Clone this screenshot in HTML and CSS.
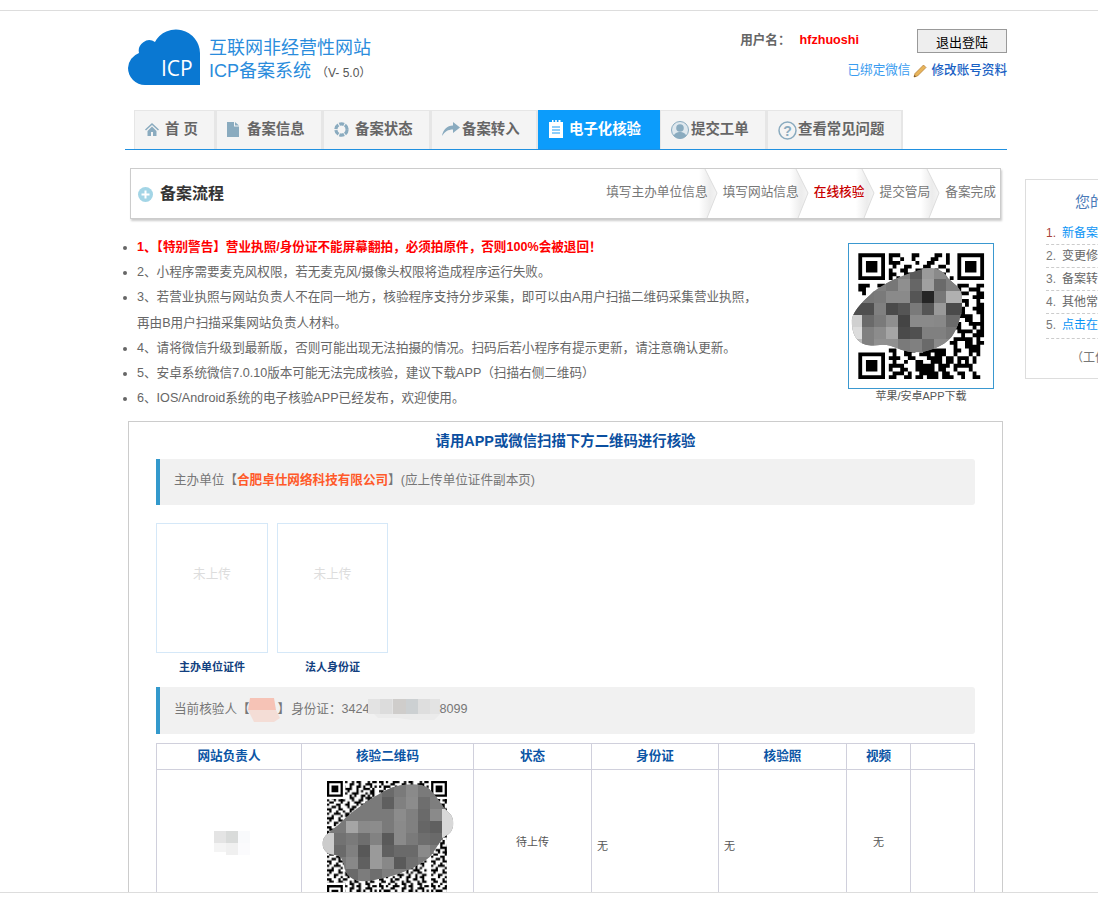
FILE: index.html
```html
<!DOCTYPE html>
<html lang="zh-CN">
<head>
<meta charset="utf-8">
<title>ICP备案系统</title>
<link rel="stylesheet" href="styles.css">
</head>
<body>
<div class="topbar"></div>
<div class="viewport">
  <main class="main">
    <header class="header">
      <div class="brand">
        <svg class="cloud" viewBox="0 0 72 56" width="72" height="56">
          <path fill="#0a78d2" d="M72 56V24A24 24 0 0 0 27 13A10.5 10.5 0 0 0 11 24A17 17 0 0 0 0 39A17 17 0 0 0 17 56Z"/>
          <text x="33" y="47" class="cloud-text">ICP</text>
        </svg>
        <div class="brand-text">
          <div class="brand-line">互联网非经营性网站</div>
          <div class="brand-line">ICP备案系统 <span class="version">（V- 5.0）</span></div>
        </div>
      </div>
      <div class="account">
        <div class="account-row">
          <span class="user-label">用户名：</span>
          <span class="user-name">hfzhuoshi</span>
          <button class="logout">退出登陆</button>
        </div>
        <div class="account-links">
          <a class="link-wechat">已绑定微信</a>
          <svg class="pencil" viewBox="0 0 14 14" width="14" height="14">
            <path fill="#e8b45a" stroke="#b07a30" stroke-width=".7" d="M10.5 1l2.5 2.5L4.5 12 1 13l1-3.5z"/>
            <path fill="#6b4a20" d="M1 13l.5-2 1.5 1.5z"/>
          </svg>
          <a class="link-edit">修改账号资料</a>
        </div>
      </div>
    </header>

    <nav class="nav">
      <a class="tab tab-home">
        <svg class="ico ico-home" viewBox="0 0 14 14" width="14" height="14"><path fill="#8aabbf" d="M7 1L0 7.5l1 1L7 3l6 5.5 1-1zM2.5 9v5h3.5v-4h2v4h3.500V9L7 4.500z"/></svg>
        <span>首 页</span>
      </a>
      <a class="tab tab-md">
        <svg class="ico ico-file" viewBox="0 0 12 15" width="12" height="15"><path fill="#8aabbf" d="M0 0h7v4.500h5V15H0zM8 0l4 3.500H8z"/></svg>
        <span>备案信息</span>
      </a>
      <a class="tab tab-lg">
        <svg class="ico ico-ring" viewBox="0 0 16 16" width="15" height="15"><circle cx="8" cy="8" r="6" fill="none" stroke="#8aabbf" stroke-width="3.4" stroke-dasharray="5.200 1.080"/></svg>
        <span>备案状态</span>
      </a>
      <a class="tab tab-md">
        <svg class="ico ico-arrow" viewBox="0 0 18 14" width="18" height="14"><path fill="#8aabbf" d="M11 0l7 5.500L11 11V7.500C6 7.500 3 9.500 0 14 1 8 5 3.500 11 3.500z"/></svg>
        <span>备案转入</span>
      </a>
      <a class="tab tab-active">
        <svg class="ico ico-clip" viewBox="0 0 14 18" width="14" height="18"><path fill="#fff" d="M0 2h3V0h1.500v2h1.700V0h1.600v2h1.700V0H11.500v2H14v16H0z"/><path stroke="#1a9cf5" stroke-width="1" d="M3 7h8M3 10h8M3 13h8"/></svg>
        <span>电子化核验</span>
      </a>
      <a class="tab tab-md">
        <svg class="ico ico-person" viewBox="0 0 18 18" width="18" height="18"><circle cx="9" cy="9" r="8.500" fill="#dfe8ee" stroke="#8aabbf"/><circle cx="9" cy="7" r="3.800" fill="#8aabbf"/><path fill="#8aabbf" d="M2.800 15c.7-3 3.500-4 6.200-4s5.500 1 6.200 4A8.500 8.500 0 0 1 2.800 15z"/></svg>
        <span>提交工单</span>
      </a>
      <a class="tab tab-xl">
        <svg class="ico ico-help" viewBox="0 0 19 19" width="19" height="19"><circle cx="9.500" cy="9.500" r="8.500" fill="none" stroke="#8aabbf" stroke-width="1.500"/><text x="9.500" y="15" class="help-mark">?</text></svg>
        <span>查看常见问题</span>
      </a>
    </nav>

    <section class="flow">
      <h2 class="flow-title">
        <svg viewBox="0 0 15 15" width="15" height="15"><circle cx="7.500" cy="7.500" r="7.500" fill="#a3d5e6"/><path stroke="#fff" stroke-width="2" d="M7.500 3.500v8M3.500 7.500h8"/></svg>
        备案流程
      </h2>
      <svg class="defs" width="0" height="0"><defs><linearGradient id="chevfill" x1="0" x2="1" y1="0" y2="0"><stop offset="0" stop-color="#fff"/><stop offset=".35" stop-color="#fff"/><stop offset=".75" stop-color="#ececec"/><stop offset="1" stop-color="#f4f4f4"/></linearGradient></defs></svg>
      <ol class="steps">
        <li class="step"><svg class="chev" viewBox="0 0 30 49"><path fill="url(#chevfill)" d="M0 0H16L28 24 18 49H0Z"/><path fill="none" stroke="#ddd" d="M16 0L28 24 18 49"/></svg><span>填写主办单位信息</span></li>
        <li class="step"><svg class="chev" viewBox="0 0 30 49"><path fill="url(#chevfill)" d="M0 0H16L28 24 18 49H0Z"/><path fill="none" stroke="#ddd" d="M16 0L28 24 18 49"/></svg><span>填写网站信息</span></li>
        <li class="step step-on"><svg class="chev" viewBox="0 0 30 49"><path fill="url(#chevfill)" d="M0 0H16L28 24 18 49H0Z"/><path fill="none" stroke="#ddd" d="M16 0L28 24 18 49"/></svg><span>在线核验</span></li>
        <li class="step"><svg class="chev" viewBox="0 0 30 49"><path fill="url(#chevfill)" d="M0 0H16L28 24 18 49H0Z"/><path fill="none" stroke="#ddd" d="M16 0L28 24 18 49"/></svg><span>提交管局</span></li>
        <li class="step"><span>备案完成</span></li>
      </ol>
    </section>

    <section class="notice">
      <ul class="notice-list">
        <li class="warn">1、【特别警告】营业执照/身份证不能屏幕翻拍，必须拍原件，否则100%会被退回！</li>
        <li>2、小程序需要麦克风权限，若无麦克风/摄像头权限将造成程序运行失败。</li>
        <li>3、若营业执照与网站负责人不在同一地方，核验程序支持分步采集，即可以由A用户扫描二维码采集营业执照，<br>再由B用户扫描采集网站负责人材料。</li>
        <li>4、请将微信升级到最新版，否则可能出现无法拍摄的情况。扫码后若小程序有提示更新，请注意确认更新。</li>
        <li>5、安卓系统微信7.0.10版本可能无法完成核验，建议下载APP（扫描右侧二维码）</li>
        <li>6、IOS/Android系统的电子核验APP已经发布，欢迎使用。</li>
      </ul>
      <figure class="app-qr">
        <div class="app-qr-box">
          <svg class="qr" viewBox="-3 -3 432 432" width="144" height="144">
            <defs>
              <clipPath id="blob1"><path d="M5 225C12 190 45 165 70 140 110 110 170 85 210 75 250 62 280 75 295 100 310 118 335 125 336 160 338 200 325 250 305 275 280 305 235 322 190 322 150 320 125 295 90 300 50 305 5 300 5 225Z"/></clipPath>
            </defs>
            <g transform="translate(25 25) scale(11.43)">
              <path class="qr-ink" d="M.5 0v7M6.500 0v7M0 .5h7M0 6.500h7M2 2.500h3M2 3.500h3M2 4.500h3M26.500 0v7M32.500 0v7M26 .5h7M26 6.500h7M28 2.500h3M28 3.500h3M28 4.500h3M.5 26v7M6.500 26v7M0 26.500h7M0 32.500h7M2 28.500h3M2 29.500h3M2 30.500h3"/>
              <path class="qr-ink" d="M8 .5h3m3 0h2m4 0h2m1 0h1M8 1.500h1m2 0h1m2 0h1m4 0h2m2 0h1M8 2.500h3m4 0h1m2 0h2m3 0h1M9 3.500h1m2 0h2m3 0h2m2 0h2M8 4.500h1m2 0h2m2 0h2m3 0h1m2 0h1M8 5.500h2m2 0h3m6 0h2M8 6.500h1m1 0h1m1 0h1m1 0h1m1 0h1m1 0h1m1 0h1m1 0h1m1 0h1M9 7.500h3M0 8.500h3m2 0h2M26 8.500h3m2 0h2M0 9.500h2m4 0h1M25 9.500h2m2 0h3M1 10.500h1M27 10.500h2m2 0h2M26 11.500h1m3 0h3M26 12.500h3m2 0h1M28 13.500h1m2 0h2M26 14.500h2m2 0h3M27 15.500h1m3 0h2M26 16.500h4m2 0h1M28 17.500h2m2 0h1M26 18.500h1m2 0h4M25 19.500h2m3 0h1m1 0h1M26 20.500h4m1 0h2M27 21.500h1m2 0h3M25 22.500h5m1 0h1M24 23.500h2m2 0h2m1 0h2M25 24.500h1m2 0h4M8 25.500h2m2 0h3m2 0h6m2 0h2m2 0h3M9 26.500h1m2 0h2m2 0h3m1 0h3m2 0h1m3 0h1m1 0h1M8 27.500h3m2 0h2m3 0h4m1 0h2m1 0h3m1 0h1M9 28.500h1m2 0h1m2 0h2m2 0h3m1 0h2m1 0h1m1 0h1m1 0h1M8 29.500h4m3 0h5m1 0h3m1 0h5M8 30.500h1m2 0h2m2 0h5m1 0h2m2 0h1m3 0h1M9 31.500h3m1 0h1m2 0h5m1 0h2m2 0h2m2 0h1M8 32.500h2m2 0h2m1 0h2m1 0h3m1 0h3m2 0h1m2 0h2"/>
            </g>
            <g clip-path="url(#blob1)">
              <rect x="0" y="60" width="340" height="270" fill="#808080"/>
              <rect x="180" y="66" width="36" height="36" fill="#5a5a5a"/><rect x="216" y="66" width="36" height="36" fill="#9a9a9a"/><rect x="252" y="66" width="36" height="36" fill="#8a8a8a"/>
              <rect x="108" y="102" width="36" height="36" fill="#777"/><rect x="144" y="102" width="36" height="36" fill="#8f8f8f"/><rect x="180" y="102" width="36" height="36" fill="#666"/><rect x="216" y="102" width="36" height="36" fill="#a0a0a0"/><rect x="252" y="102" width="36" height="36" fill="#6a6a6a"/><rect x="288" y="102" width="48" height="36" fill="#808080"/>
              <rect x="36" y="138" width="36" height="36" fill="#777"/><rect x="72" y="138" width="36" height="36" fill="#7a7a7a"/><rect x="108" y="138" width="36" height="36" fill="#8a8a8a"/><rect x="144" y="138" width="36" height="36" fill="#8a8a8a"/><rect x="180" y="138" width="36" height="36" fill="#555"/><rect x="216" y="138" width="36" height="36" fill="#252525"/><rect x="252" y="138" width="36" height="36" fill="#777"/><rect x="288" y="138" width="48" height="36" fill="#b0b0b0"/>
              <rect x="0" y="174" width="72" height="36" fill="#4f4f4f"/><rect x="72" y="174" width="36" height="36" fill="#808080"/><rect x="108" y="174" width="36" height="36" fill="#4a4a4a"/><rect x="144" y="174" width="36" height="36" fill="#555"/><rect x="180" y="174" width="36" height="36" fill="#7a7a7a"/><rect x="216" y="174" width="36" height="36" fill="#555"/><rect x="252" y="174" width="36" height="36" fill="#999"/><rect x="288" y="174" width="48" height="36" fill="#4a4a4a"/>
              <rect x="0" y="210" width="36" height="36" fill="#d0d0d0"/><rect x="36" y="210" width="36" height="36" fill="#6a6a6a"/><rect x="72" y="210" width="36" height="36" fill="#7a7a7a"/><rect x="108" y="210" width="36" height="36" fill="#8f8f8f"/><rect x="144" y="210" width="36" height="36" fill="#444"/><rect x="180" y="210" width="36" height="36" fill="#8a8a8a"/><rect x="216" y="210" width="36" height="36" fill="#8a8a8a"/><rect x="252" y="210" width="36" height="36" fill="#888"/><rect x="288" y="210" width="48" height="36" fill="#6a6a6a"/>
              <rect x="0" y="246" width="36" height="36" fill="#dcdcdc"/><rect x="36" y="246" width="36" height="36" fill="#808080"/><rect x="72" y="246" width="36" height="36" fill="#8c8c8c"/><rect x="108" y="246" width="36" height="36" fill="#a5a5a5"/><rect x="144" y="246" width="36" height="36" fill="#4a4a4a"/><rect x="180" y="246" width="36" height="36" fill="#505050"/><rect x="216" y="246" width="36" height="36" fill="#808080"/><rect x="252" y="246" width="36" height="36" fill="#808080"/><rect x="288" y="246" width="48" height="36" fill="#777"/>
              <rect x="0" y="282" width="36" height="48" fill="#bbb"/><rect x="36" y="282" width="36" height="48" fill="#808080"/><rect x="72" y="282" width="72" height="48" fill="#909090"/><rect x="144" y="282" width="36" height="48" fill="#7a7a7a"/><rect x="180" y="282" width="36" height="48" fill="#808080"/><rect x="216" y="282" width="36" height="48" fill="#6a6a6a"/><rect x="252" y="282" width="48" height="48" fill="#8a8a8a"/>
            </g>
          </svg>
        </div>
        <figcaption class="app-qr-cap">苹果/安卓APP下载</figcaption>
      </figure>
    </section>

    <section class="panel">
      <h3 class="panel-title">请用APP或微信扫描下方二维码进行核验</h3>
      <div class="bar">主办单位【<b class="org">合肥卓仕网络科技有限公司</b>】(应上传单位证件副本页)</div>
      <div class="uploads">
        <figure class="upload upload-a">
          <div class="upload-box">未上传</div>
          <figcaption class="upload-cap">主办单位证件</figcaption>
        </figure>
        <figure class="upload upload-b">
          <div class="upload-box">未上传</div>
          <figcaption class="upload-cap">法人身份证</figcaption>
        </figure>
      </div>
      <div class="bar bar-person">当前核验人【<svg class="mask-name" viewBox="0 0 32 24" width="32" height="24"><path fill="#f6c3b6" d="M2 0h24l2 12H0z"/><path fill="#f4ddd6" d="M0 12h28l4 8-6 4H6z"/></svg>】<span class="id-label">身份证：3424</span><svg class="mask-id" viewBox="0 0 72 22" width="72" height="22"><rect width="72" height="15" fill="#e3e3e3"/><rect x="12" width="12" height="15" fill="#dcdcdc"/><rect x="25" width="13" height="15" fill="#cfcdcb"/><rect x="38" width="12" height="15" fill="#ccd0d2"/><rect x="50" width="12" height="15" fill="#dedede"/><path fill="#ebebeb" d="M6 15h66l-6 6H44L30 19H10z"/></svg>8099</div>
      <table class="verify">
        <colgroup><col class="c1"><col class="c2"><col class="c3"><col class="c4"><col class="c5"><col class="c6"><col class="c7"></colgroup>
        <thead>
          <tr><th>网站负责人</th><th>核验二维码</th><th>状态</th><th>身份证</th><th>核验照</th><th>视频</th><th></th></tr>
        </thead>
        <tbody>
          <tr>
            <td class="center"><svg class="mask-person" viewBox="0 0 36 24" width="36" height="24"><rect width="12" height="12" fill="#e4e4e4"/><rect x="12" width="12" height="12" fill="#d9dbda"/><rect x="24" width="12" height="12" fill="#f9fafc"/><rect y="12" width="12" height="9" fill="#f4f4f4"/><rect x="12" y="12" width="12" height="12" fill="#f0f0f0"/><rect x="24" y="12" width="12" height="12" fill="#fbfbfd"/></svg></td>
            <td class="qr-cell">
              <svg class="qr qr-small" viewBox="0 0 420 420" width="140" height="140">
                <defs>
                  <clipPath id="blob2"><path d="M8 200C12 175 50 160 75 130 110 100 150 70 200 45 240 25 300 22 325 40 350 60 365 95 385 112 405 125 405 165 385 178 360 190 355 215 330 245 295 275 240 300 160 315 110 325 85 310 75 285 68 250 65 240 30 238 15 230 6 220 8 200Z"/></clipPath>
                  <pattern id="noise" width="23" height="23" patternUnits="userSpaceOnUse">
                    <path class="qr-ink" d="M0 .5h2m1 0h1m2 0h3m2 0h1m1 0h2m3 0h1m1 0h2M1 1.500h1m3 0h2m3 0h2m2 0h1m2 0h3M0 2.500h1m1 0h3m2 0h1m2 0h1m2 0h2m1 0h1m2 0h1m1 0h1M2 3.500h1m2 0h1m2 0h3m2 0h1m2 0h3m1 0h1M0 4.500h2m2 0h2m3 0h1m3 0h1m1 0h1m3 0h2M1 5.500h1m2 0h1m2 0h2m2 0h3m3 0h1m1 0h2M0 6.500h1m3 0h3m3 0h1m1 0h1m2 0h2m1 0h1m1 0h1M2 7.500h2m2 0h1m3 0h2m3 0h1m1 0h3M0 8.500h1m2 0h1m1 0h3m3 0h1m2 0h2m2 0h1m1 0h1M1 9.500h2m3 0h1m2 0h1m2 0h3m2 0h1m2 0h1M0 10.500h1m3 0h2m2 0h2m3 0h1m1 0h2m2 0h2M2 11.500h2m1 0h1m3 0h1m1 0h2m3 0h1m2 0h1M0 12.500h2m3 0h2m3 0h2m2 0h1m1 0h1m3 0h1M1 13.500h1m2 0h1m2 0h1m2 0h1m2 0h3m2 0h2M0 14.500h1m2 0h3m2 0h2m3 0h1m2 0h1m2 0h1M2 15.500h1m3 0h1m1 0h2m3 0h2m1 0h1m1 0h1M0 16.500h3m2 0h1m3 0h1m2 0h1m2 0h3m2 0h1M1 17.500h1m3 0h2m1 0h1m3 0h1m1 0h1m2 0h2M0 18.500h1m2 0h2m3 0h3m2 0h1m2 0h1m2 0h2M3 19.500h1m2 0h1m2 0h1m2 0h2m2 0h1m1 0h2M0 20.500h2m3 0h1m1 0h2m3 0h1m2 0h2m2 0h1M1 21.500h2m2 0h2m3 0h1m1 0h2m3 0h1m1 0h2M0 22.500h1m3 0h1m2 0h1m2 0h2m2 0h1m2 0h2"/>
                  </pattern>
                </defs>
                <g transform="translate(21 18) scale(6.79)">
                  <rect width="53" height="53" fill="url(#noise)"/>
                  <path class="qr-clear" d="M0 0h8v8H0zM45 0h8v8h-8zM0 45h8v8H0z"/>
                  <path class="qr-ink" d="M.5 0v7M6.500 0v7M0 .5h7M0 6.500h7M2 2.500h3M2 3.500h3M2 4.500h3M46.500 0v7M52.500 0v7M46 .5h7M46 6.500h7M48 2.500h3M48 3.500h3M48 4.500h3M.5 46v7M6.500 46v7M0 46.500h7M0 52.500h7M2 48.500h3M2 49.500h3M2 50.500h3"/>
                </g>
                <g clip-path="url(#blob2)">
                  <rect x="0" y="20" width="410" height="310" fill="#7a7a7a"/>
                  <rect x="186" y="30" width="36" height="36" fill="#6a6a6a"/><rect x="222" y="30" width="36" height="36" fill="#7a7a7a"/><rect x="258" y="30" width="36" height="36" fill="#8a8a8a"/><rect x="294" y="30" width="36" height="36" fill="#7a7a7a"/>
                  <rect x="186" y="66" width="36" height="36" fill="#5f5f5f"/><rect x="222" y="66" width="36" height="36" fill="#808080"/><rect x="258" y="66" width="36" height="36" fill="#8c8c8c"/><rect x="294" y="66" width="36" height="36" fill="#6e6e6e"/><rect x="330" y="66" width="36" height="36" fill="#7e7e7e"/>
                  <rect x="222" y="102" width="36" height="36" fill="#8c8c8c"/><rect x="258" y="102" width="36" height="36" fill="#808080"/><rect x="294" y="102" width="36" height="36" fill="#6a6a6a"/><rect x="330" y="102" width="36" height="36" fill="#8a8a8a"/><rect x="366" y="102" width="44" height="36" fill="#d8d8d8"/>
                  <rect x="78" y="138" width="36" height="36" fill="#a5a5a5"/><rect x="114" y="138" width="36" height="36" fill="#8a8a8a"/><rect x="150" y="138" width="36" height="36" fill="#8c8c8c"/><rect x="222" y="138" width="36" height="36" fill="#8a8a8a"/><rect x="258" y="138" width="36" height="36" fill="#808080"/><rect x="294" y="138" width="36" height="36" fill="#666"/><rect x="330" y="138" width="36" height="36" fill="#606060"/><rect x="366" y="138" width="44" height="50" fill="#d8d8d8"/>
                  <rect x="0" y="174" width="42" height="72" fill="#ccc"/><rect x="42" y="174" width="36" height="36" fill="#727272"/><rect x="114" y="174" width="36" height="36" fill="#6e6e6e"/><rect x="150" y="174" width="36" height="36" fill="#828282"/><rect x="186" y="174" width="36" height="36" fill="#5a5a5a"/><rect x="222" y="174" width="36" height="36" fill="#8a8a8a"/><rect x="294" y="174" width="36" height="36" fill="#6e6e6e"/><rect x="330" y="174" width="36" height="36" fill="#6a6a6a"/>
                  <rect x="42" y="210" width="36" height="36" fill="#6a6a6a"/><rect x="78" y="210" width="36" height="36" fill="#808080"/><rect x="114" y="210" width="36" height="36" fill="#585858"/><rect x="150" y="210" width="36" height="36" fill="#9a9a9a"/><rect x="186" y="210" width="36" height="36" fill="#606060"/><rect x="222" y="210" width="72" height="36" fill="#6a6a6a"/><rect x="294" y="210" width="36" height="36" fill="#8a8a8a"/>
                  <rect x="78" y="246" width="36" height="36" fill="#888"/><rect x="114" y="246" width="36" height="36" fill="#606060"/><rect x="150" y="246" width="36" height="36" fill="#9a9a9a"/><rect x="186" y="246" width="36" height="36" fill="#888"/><rect x="222" y="246" width="36" height="36" fill="#5a5a5a"/><rect x="258" y="246" width="36" height="36" fill="#707070"/>
                  <rect x="78" y="282" width="36" height="36" fill="#6a6a6a"/><rect x="114" y="282" width="36" height="36" fill="#7c7c7c"/><rect x="150" y="282" width="36" height="36" fill="#6e6e6e"/><rect x="186" y="282" width="36" height="36" fill="#7e7e7e"/><rect x="222" y="282" width="36" height="36" fill="#808080"/>
                </g>
              </svg>
            </td>
            <td class="center status">待上传</td>
            <td class="low">无</td>
            <td class="low">无</td>
            <td class="center">无</td>
            <td></td>
          </tr>
        </tbody>
      </table>
    </section>
  </main>

  <aside class="side">
    <h4 class="side-title">您的备案进度提示</h4>
    <ol class="side-list">
      <li class="side-link side-first">新备案操作指南</li>
      <li>变更修改说明</li>
      <li>备案转入说明</li>
      <li>其他常见问题</li>
      <li class="side-link side-last">点击在线咨询</li>
    </ol>
    <p class="side-foot">（工作时间）</p>
  </aside>
</div>
<div class="bottombar"></div>
</body>
</html>
```

FILE: styles.css
```css
* { box-sizing: border-box; }
html, body { margin: 0; height: 100%; }
body {
  display: flex;
  flex-direction: column;
  height: 898px;
  overflow: hidden;
  background: #fff;
  color: #666;
  font: 12.6px/1.4 "Liberation Sans", "Noto Sans CJK SC", sans-serif;
}
.topbar { flex: none; height: 11px; border-bottom: 1px solid #ddd; }
.bottombar { flex: none; height: 6px; border-top: 1px solid #ddd; }
.viewport { flex: 1; min-height: 0; display: flex; align-items: flex-start; overflow: hidden; }

.main { flex: none; width: 882px; margin-left: 125px; }

/* header */
.header { display: flex; justify-content: space-between; height: 99px; }
.brand { display: flex; margin: 18px 0 0 3px; }
.cloud { display: block; }
.cloud-text { fill: #fff; font: 21px "Open Sans", sans-serif; }
.brand-text { margin: 8px 0 0 9px; }
.brand-line { font-size: 18px; line-height: 23px; color: #2a8cdc; white-space: nowrap; }
.version { font-size: 12px; color: #555; }
.account { display: flex; flex-direction: column; align-items: flex-end; padding-top: 18px; }
.account-row { display: flex; align-items: center; height: 24px; }
.user-label { font-size: 12.6px; font-weight: bold; color: #666; margin-right: 9px; }
.user-name { font-size: 12.6px; font-weight: bold; color: #f00; margin-right: 58px; }
.logout {
  width: 90px; height: 24px; padding: 0;
  background: #eee; border: 1px solid #999; color: #000;
  font: 13px "Liberation Sans", "Noto Sans CJK SC", sans-serif;
}
.account-links { display: flex; align-items: center; height: 22px; margin-top: 7px; }
.link-wechat { color: #3a9cf0; }
.pencil { margin: 0 4px 0 3px; }
.link-edit { color: #1a62c4; font-weight: 500; }

/* nav */
.nav { display: flex; height: 40px; padding-left: 9px; border-bottom: 1px solid #2090e0; }
.tab {
  display: flex; align-items: center; height: 39px; padding: 0 0 2px 10px;
  background: #f4f4f4; border: 1px solid #e6e6e6; border-width: 1px 2px 0 1px;
  color: #666; font-size: 14.4px; font-weight: bold; white-space: nowrap;
}
.tab-home { width: 82px; }
.tab-md { width: 107px; }
.tab-lg { width: 108px; }
.tab-xl { width: 136px; }
.tab-active { width: 122px; background: #0c9cfb; border-color: #0c9cfb; color: #fff; }
.ico { flex: none; display: block; }
.ico-home { margin-right: 6px; }
.ico-file { margin-right: 8px; }
.ico-ring { margin-right: 6px; }
.ico-arrow { margin-right: 2px; }
.ico-clip { margin-right: 6px; }
.ico-person { margin-right: 2px; margin-top: 2px; }
.ico-help { margin-right: 1px; margin-top: 3px; }
.help-mark { fill: #8aabbf; font: bold 14px "Liberation Sans", sans-serif; text-anchor: middle; }

/* flow */
.flow {
  display: flex; justify-content: space-between; align-items: stretch;
  width: 871px; height: 51px; margin: 18px 0 0 5px;
  border: 1px solid #ccc; box-shadow: 1px 2px 2px #ccc;
}
.flow-title {
  display: flex; align-items: center; gap: 7px; margin: 0; padding: 2px 0 0 7px;
  color: #333; font-size: 16px; font-weight: bold;
}
.defs { position: absolute; }
.steps { display: flex; gap: 15px; margin: 0; padding: 0 4px 0 0; list-style: none; font-size: 12.7px; }
.step { position: relative; display: flex; align-items: center; height: 49px; padding-bottom: 1px; color: #777; }
.step span { position: relative; }
.step-on { color: #c80000; font-weight: 500; }
.chev { position: absolute; top: 0; right: -11px; width: 30px; height: 49px; }

/* notice */
.notice { display: flex; margin: 16px 0 10px; }
.notice-list { flex: none; width: 723px; margin: 0; padding: 0 0 0 12px; line-height: 25.2px; font-size: 12.6px; color: #666; }
.notice-list li::marker { color: #666; }
.warn { color: #f00; font-weight: bold; }
.app-qr { margin: 8px 0 0; width: 146px; }
.app-qr-box { width: 146px; height: 146px; border: 1px solid #3a98d0; }
.app-qr-cap { font-size: 11px; line-height: 15px; text-align: center; white-space: nowrap; color: #555; }
.qr { display: block; }
.qr-ink { fill: none; stroke: #000; stroke-width: 1; }
.qr-clear { fill: #fff; }

/* panel */
.panel { width: 875px; height: 600px; margin-left: 3px; padding: 0 27px; border: 1px solid #ccc; }
.panel-title { margin: 0; height: 37px; line-height: 39px; text-align: center; color: #0b4fa0; font-size: 14.4px; font-weight: bold; }
.bar {
  height: 46px; padding-left: 14px; line-height: 42px;
  background: #f1f1f1; border-left: 4px solid #3399cc; border-radius: 0 3px 3px 0; color: #777; font-size: 12.6px;
}
.bar-person { height: 47px; line-height: 45px; }
.org { color: #ff5a2a; }
.mask-name { vertical-align: middle; margin: 0 -2px 0 -2px; }
.id-label { margin-left: 1px; }
.mask-id { vertical-align: middle; margin-left: -2px; }
.uploads { display: flex; gap: 9px; margin-top: 18px; }
.upload { margin: 0; }
.upload-a { width: 112px; }
.upload-b { width: 111px; }
.upload-box {
  height: 130px; padding-top: 41px; line-height: 18px; text-align: center;
  border: 1px solid #d5e8f8; color: #ddd;
}
.upload-cap { height: 34px; line-height: 28px; text-align: center; color: #123f80; font-size: 11px; font-weight: bold; }
.verify { width: 818px; margin-top: 9px; border-collapse: collapse; table-layout: fixed; }
.c1 { width: 145px; } .c2 { width: 172px; } .c3 { width: 118px; } .c4 { width: 127px; }
.c5 { width: 128px; } .c6 { width: 64px; } .c7 { width: 64px; }
.verify th, .verify td { border: 1px solid #d0d0dc; padding: 0; }
.verify th { height: 26px; color: #0b55a5; font-size: 12.6px; font-weight: bold; }
.verify td { height: 146px; font-size: 11px; color: #555; }
.center { text-align: center; }
.low { padding: 8px 0 0 5px !important; }
.status { color: #664; }
.mask-person { display: block; margin: 0 0 0 57px; }
.qr-cell { vertical-align: top; }
.qr-small { margin: 5px 0 0 18px; }

/* side */
.side {
  flex: none; width: 220px; height: 200px; margin: 168px 0 0 18px;
  padding: 0 0 0 20px; border: 1px solid #ddd; white-space: nowrap;
}
.side-title { margin: 0; padding: 11px 0 0 29px; height: 42px; color: #4a7ab8; font-size: 15px; font-weight: normal; }
.side-list { margin: 0; padding: 0; width: 75px; list-style: none; font-size: 12px; counter-reset: item; }
.side-list li { height: 23px; line-height: 23px; padding-left: 16px; border-bottom: 1px dashed #ccc; color: #666; counter-increment: item; position: relative; }
.side-list li::before { content: counter(item) "."; position: absolute; left: 0; color: #777; }
.side-first::before { color: #a8433a !important; }
.side-link { color: #0a94f5 !important; }
.side-last { height: 25px !important; }
.side-foot { margin: 11px 0 0 25px; font-size: 12px; color: #777; }
```
